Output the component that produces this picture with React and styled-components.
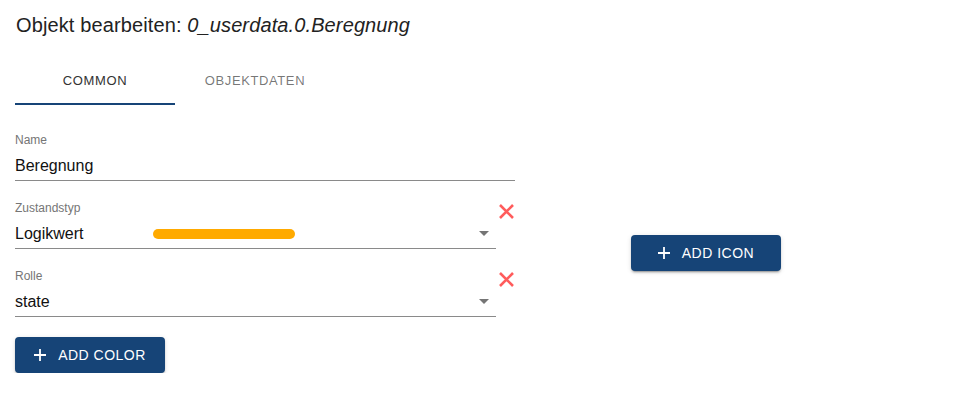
import React from 'react';
import styled, { createGlobalStyle } from 'styled-components';

const GlobalStyle = createGlobalStyle`
  body {
    margin: 0;
    background: #fff;
    font-family: "Liberation Sans", Arial, sans-serif;
    color: rgba(0, 0, 0, 0.87);
  }
`;

const Page = styled.div`
  padding: 11px 15px 0 15px;
`;

const Title = styled.h2`
  margin: 0;
  font-size: 20px;
  font-weight: 400;
  line-height: 28px;
  letter-spacing: 0.12px;
  color: #222;
  padding-left: 1px;
`;

const ObjectId = styled.span`
  font-style: italic;
`;

const Tabs = styled.div`
  display: flex;
  margin-top: 18px;
`;

const Tab = styled.div`
  width: 160px;
  height: 48px;
  display: flex;
  align-items: center;
  justify-content: center;
  font-size: 13px;
  letter-spacing: 0.6px;
  text-transform: uppercase;
  color: ${p => (p.$active ? '#333' : 'rgba(0, 0, 0, 0.55)')};
  border-bottom: 2px solid ${p => (p.$active ? '#164477' : 'transparent')};
  box-sizing: border-box;
`;

const Body = styled.div`
  display: flex;
  margin-top: 28px;
`;

const Form = styled.div`
  width: 500px;
  display: flex;
  flex-direction: column;
  gap: 20px;
`;

const Row = styled.div`
  display: flex;
  align-items: flex-start;
`;

const Field = styled.div`
  width: ${p => p.$width}px;
  height: 48px;
  border-bottom: 1px solid #8a8a8a;
  box-sizing: border-box;
  position: relative;
`;

const Label = styled.div`
  font-size: 12px;
  line-height: 14px;
  color: #757575;
`;

const Value = styled.div`
  display: flex;
  align-items: center;
  margin-top: 9px;
  font-size: 16px;
  line-height: 19px;
  color: #111;
`;

const ValueText = styled.span`
  width: 138px;
`;

const Progress = styled.span`
  display: block;
  width: 142px;
  height: 10px;
  border-radius: 5px;
  background: #ffaa00;
`;

const Arrow = styled.span`
  position: absolute;
  right: 7px;
  top: 30px;
  width: 0;
  height: 0;
  border-left: 5px solid transparent;
  border-right: 5px solid transparent;
  border-top: 5px solid #757575;
`;

const ClearButton = styled.button`
  border: none;
  background: none;
  padding: 0;
  margin: 2px 0 0 2px;
  width: 17px;
  height: 17px;
  cursor: pointer;
  display: flex;
`;

const Button = styled.button`
  display: inline-flex;
  align-items: center;
  justify-content: center;
  gap: 12px;
  width: 150px;
  height: 36px;
  padding: 0;
  border: none;
  border-radius: 4px;
  background: #164477;
  color: #fff;
  font-family: inherit;
  font-size: 14px;
  letter-spacing: 0.5px;
  text-transform: uppercase;
  box-shadow: 0 3px 1px -2px rgba(0, 0, 0, 0.2), 0 2px 2px 0 rgba(0, 0, 0, 0.14),
    0 1px 5px 0 rgba(0, 0, 0, 0.12);
  box-sizing: border-box;
  cursor: pointer;
`;

const ColorButton = styled(Button)`
  align-self: flex-start;
`;

const Side = styled.div`
  padding: 102px 0 0 116px;
`;

function PlusIcon() {
  return (
    <svg width="12" height="12" viewBox="0 0 12 12">
      <path d="M6 0v12M0 6h12" stroke="#fff" strokeWidth="1.8" />
    </svg>
  );
}

function CrossIcon() {
  return (
    <svg width="17" height="17" viewBox="0 0 17 17">
      <path d="M2 2l13 13M15 2L2 15" stroke="#ff5c5c" strokeWidth="2.6" />
    </svg>
  );
}

export default function App() {
  return (
    <Page>
      <GlobalStyle />
      <Title>
        Objekt bearbeiten: <ObjectId>0_userdata.0.Beregnung</ObjectId>
      </Title>
      <Tabs>
        <Tab $active>Common</Tab>
        <Tab>Objektdaten</Tab>
      </Tabs>
      <Body>
        <Form>
          <Field $width={500}>
            <Label>Name</Label>
            <Value>Beregnung</Value>
          </Field>
          <Row>
            <Field $width={481}>
              <Label>Zustandstyp</Label>
              <Value>
                <ValueText>Logikwert</ValueText>
                <Progress />
              </Value>
              <Arrow />
            </Field>
            <ClearButton aria-label="clear">
              <CrossIcon />
            </ClearButton>
          </Row>
          <Row>
            <Field $width={481}>
              <Label>Rolle</Label>
              <Value>state</Value>
              <Arrow />
            </Field>
            <ClearButton aria-label="clear">
              <CrossIcon />
            </ClearButton>
          </Row>
          <ColorButton>
            <PlusIcon />
            Add color
          </ColorButton>
        </Form>
        <Side>
          <Button>
            <PlusIcon />
            Add icon
          </Button>
        </Side>
      </Body>
    </Page>
  );
}
